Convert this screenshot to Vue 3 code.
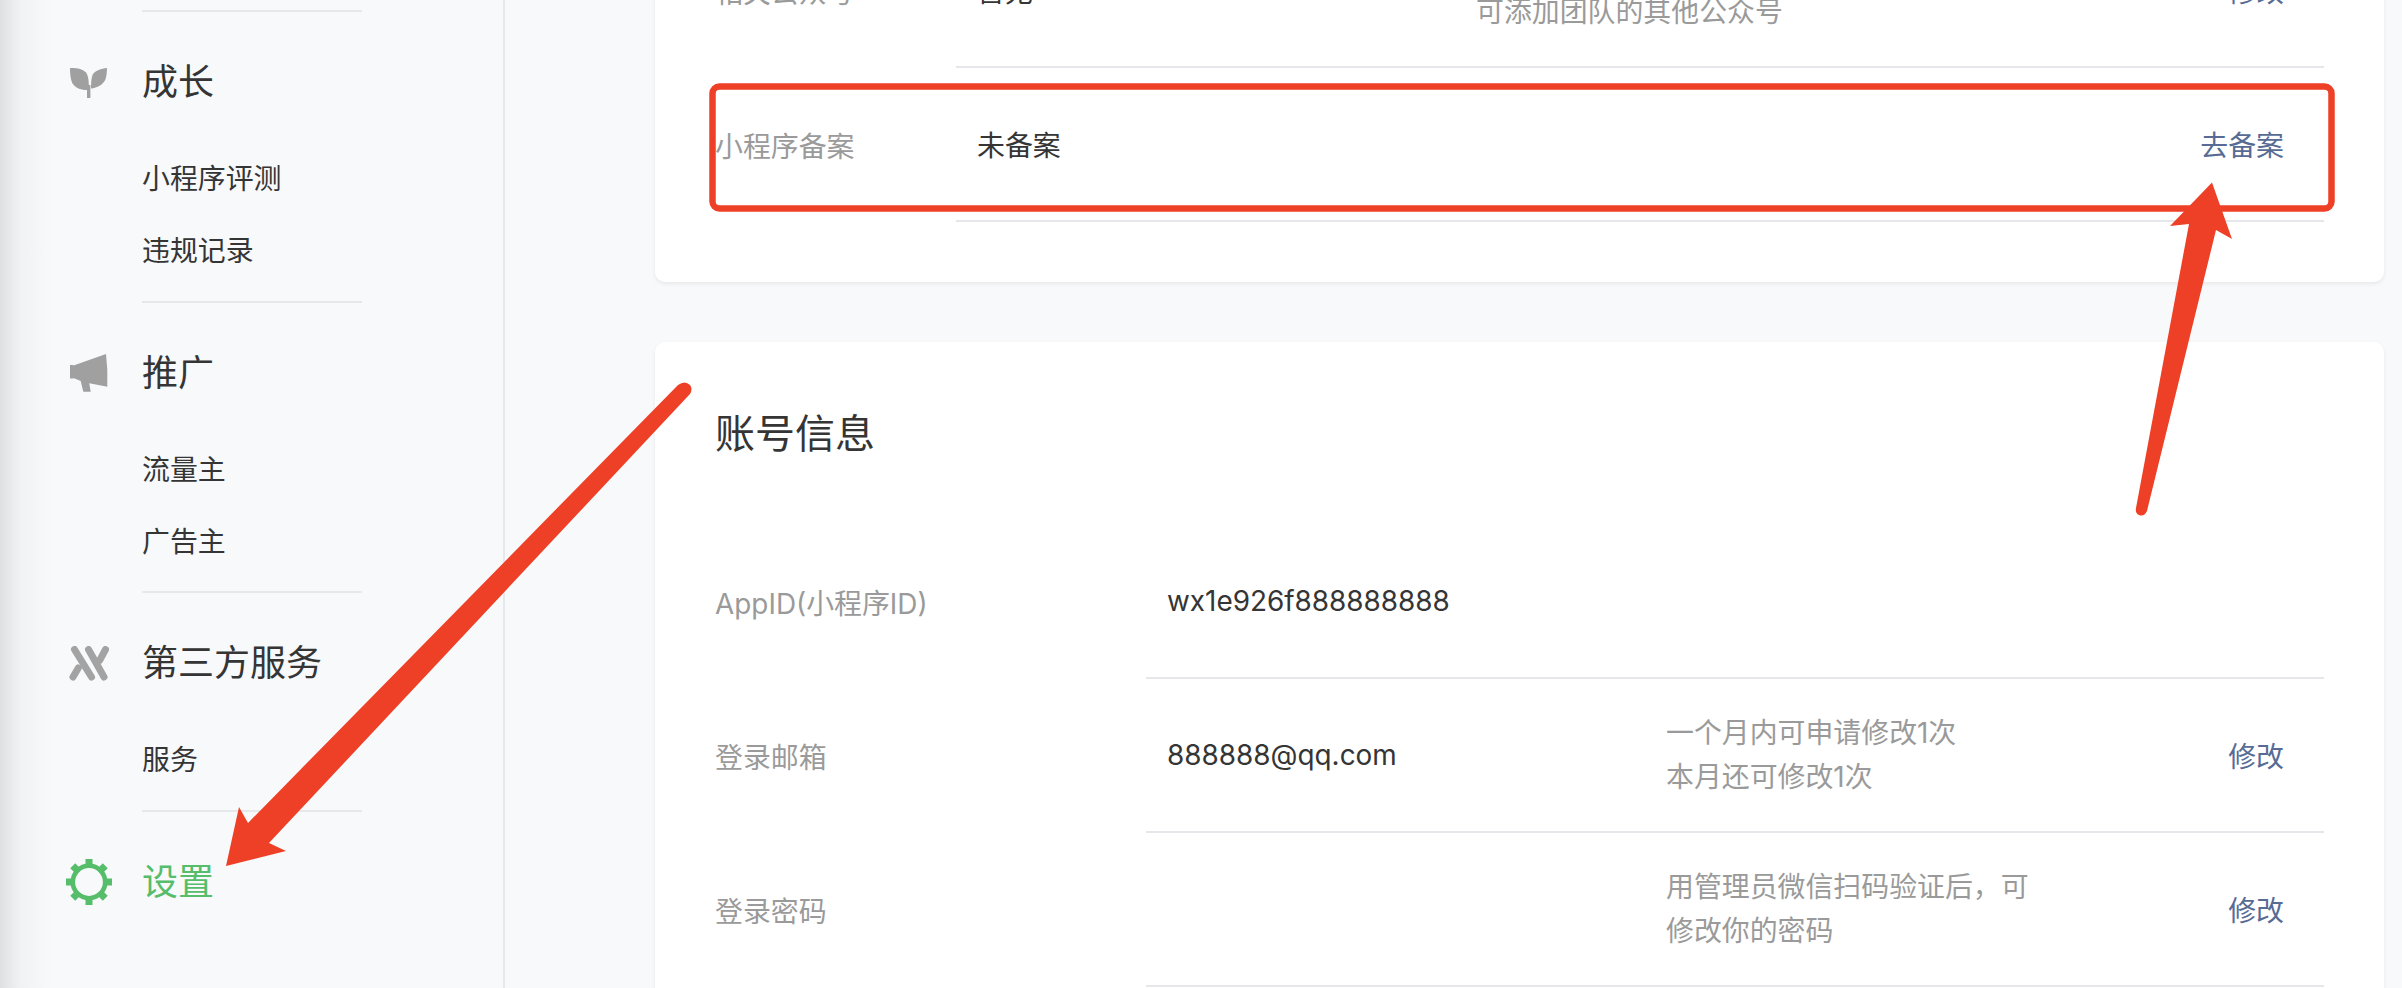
<script setup>
const navGroups = [
  { title: "成长", icon: "sprout", items: ["小程序评测", "违规记录"] },
  { title: "推广", icon: "horn", items: ["流量主", "广告主"] },
  { title: "第三方服务", icon: "tri", items: ["服务"] },
];

const gearTeeth = [0, 45, 90, 135, 180, 225, 270, 315];

const infoRows = [
  { label: "相关公众号", value: "暂无", desc: ["", "可添加团队的其他公众号"], link: "修改" },
  { label: "小程序备案", value: "未备案", desc: [], link: "去备案" },
];

const accountRows = [
  { label: "AppID(小程序ID)", value: "wx1e926f888888888", desc: [], link: "" },
  { label: "登录邮箱", value: "888888@qq.com", desc: ["一个月内可申请修改1次", "本月还可修改1次"], link: "修改" },
  { label: "登录密码", value: "", desc: ["用管理员微信扫码验证后，可", "修改你的密码"], link: "修改" },
];
</script>

<template>
  <div class="page">
    <aside class="sidebar">
      <template v-for="group in navGroups" :key="group.title">
        <div class="nav-line"></div>
        <div class="nav-head">
          <span class="nav-icon">
            <svg v-if="group.icon === 'sprout'" width="38" height="31" viewBox="0 0 38 31" fill="#a0a0a0">
              <path d="M0 1C7 0.8 13 2 16 5.5C18.5 9 19 15 18.8 23C11 23.5 5 21 2.2 16C0.5 12 0 6 0 1Z" />
              <path d="M37 1C31 1.5 25.5 3.5 23 7C21.4 10 21 16 21 21.5C27.5 20.8 32.5 18 35.2 13C36.5 9.5 37 5 37 1Z" />
              <rect x="17" y="18" width="3.4" height="13" />
            </svg>
            <svg v-else-if="group.icon === 'horn'" width="38" height="38" viewBox="0 0 38 38" fill="#a0a0a0">
              <path d="M0 11L3 11L3.5 11.5L36 0Q38 16 37.3 32.7L19.3 29.3L20.7 37.7L13.3 37.7L10.7 27L4 24.3L3 24.5L0 24.5Z" />
            </svg>
            <svg v-else width="40" height="35" viewBox="0 0 40 35" fill="none" stroke="#a3a3a3" stroke-width="7" stroke-linecap="round">
              <path d="M5.5 3.5L22.5 31" />
              <path d="M19.5 3.5L35 31" />
              <path d="M36.5 3.5L30.7 14.3" />
              <path d="M4 31L9.3 22" />
            </svg>
          </span>
          <span class="nav-title">{{ group.title }}</span>
        </div>
        <ul class="nav-list">
          <li v-for="item in group.items" :key="item">{{ item }}</li>
        </ul>
      </template>
      <div class="nav-line"></div>
      <div class="nav-head nav-head--on">
        <span class="nav-icon">
          <svg width="46" height="46" viewBox="0 0 46 46" fill="none">
            <circle cx="23" cy="23" r="16.2" stroke="#56bd6a" stroke-width="4.6" />
            <rect
              v-for="deg in gearTeeth"
              :key="deg"
              x="19.5"
              y="0"
              width="7"
              height="8"
              fill="#56bd6a"
              :transform="`rotate(${deg} 23 23)`"
            />
          </svg>
        </span>
        <span class="nav-title">设置</span>
      </div>
    </aside>

    <main class="content">
      <section class="card card--top">
        <div v-for="row in infoRows" :key="row.label" class="row">
          <div class="row-label">{{ row.label }}</div>
          <div class="row-body">
            <div class="row-value">{{ row.value }}</div>
            <div class="row-desc">
              <div v-for="(line, i) in row.desc" :key="i" class="desc-line">{{ line }}</div>
            </div>
            <a class="row-link">{{ row.link }}</a>
          </div>
        </div>
      </section>

      <section class="card card--account">
        <h2 class="card-title">账号信息</h2>
        <div v-for="row in accountRows" :key="row.label" class="row">
          <div class="row-label">{{ row.label }}</div>
          <div class="row-body">
            <div class="row-value">{{ row.value }}</div>
            <div class="row-desc">
              <div v-for="(line, i) in row.desc" :key="i" class="desc-line">{{ line }}</div>
            </div>
            <a class="row-link">{{ row.link }}</a>
          </div>
        </div>
      </section>
    </main>

    <!-- hand-drawn annotations on top of the screenshot -->
    <svg class="marks" width="2402" height="988" viewBox="0 0 2402 988">
      <rect x="712.5" y="86.5" width="1619" height="122" rx="7" fill="none" stroke="#ee4026" stroke-width="6.5" />
      <path
        fill="#ee4026"
        d="M226 866L239 807L248 823L678 385Q685 380 690 385Q693 389 690 394L269 843L286 851Z"
      />
      <path
        fill="#ee4026"
        d="M2212 182.5L2232 239L2216 230L2147 511Q2144 517 2139 515Q2135 513 2136 508L2189 224L2170 226Z"
      />
    </svg>
  </div>
</template>

<style scoped>
.page {
  position: relative;
  display: flex;
  width: 2402px;
  height: 988px;
  overflow: hidden;
  background: #f8f9fb;
  color: #353535;
  font-family: Inter, "Noto Sans CJK SC", sans-serif;
  font-size: 27.9px;
}

.sidebar {
  flex: none;
  box-sizing: border-box;
  width: 505px;
  padding-top: 10px;
  border-right: 2px solid #e7e8eb;
  background: linear-gradient(90deg, #dfe0e2, #f1f2f4 20px, #f8f9fb 52px);
}

.nav-line {
  width: 220px;
  height: 2px;
  margin-left: 142px;
  background: #e7e8eb;
}

.nav-head {
  display: flex;
  align-items: center;
  height: 72px;
  margin-top: 34px;
}

.nav-icon {
  display: flex;
  justify-content: center;
  box-sizing: border-box;
  width: 106px;
  margin-left: 36px;
}

.nav-icon svg {
  display: block;
}

.nav-title {
  font-size: 36px;
  line-height: 72px;
}

.nav-head--on .nav-title {
  color: #56bd6a;
}

.nav-list {
  margin: 25px 0 13.5px;
  padding: 0 0 0 142px;
  list-style: none;
}

.nav-list li {
  line-height: 72px;
}

.content {
  flex: 1;
  min-width: 0;
  padding: 0 18px 0 150px;
}

.card {
  box-sizing: border-box;
  border-radius: 10px;
  background: #fff;
  box-shadow: 0 2px 4px rgba(0, 0, 0, 0.07);
}

.card--top {
  margin-top: -118px;
  padding: 32px 60px 60px 60px;
  --label-w: 241px;
}

.card--account {
  margin-top: 60px;
  padding: 0 60px 60px 60px;
  --label-w: 431px;
}

.card-title {
  margin: 0;
  padding-top: 62px;
  height: 183px;
  box-sizing: border-box;
  font-size: 40px;
  font-weight: 400;
  line-height: 60px;
}

.row {
  display: flex;
  height: 154px;
}

.row-label {
  flex: none;
  width: var(--label-w);
  align-self: center;
  color: #9a9a9a;
}

.row-body {
  flex: 1;
  display: flex;
  align-items: center;
  padding: 0 40px 0 21px;
  border-bottom: 2px solid #e7e7eb;
}

.row-value {
  flex: none;
  width: 499px;
  white-space: nowrap;
}

.row-desc {
  flex: 1;
  color: #9a9a9a;
  line-height: 44px;
}

.desc-line {
  min-height: 44px;
  white-space: nowrap;
}

.row-link {
  flex: none;
  color: #576b95;
}

.marks {
  position: absolute;
  top: 0;
  left: 0;
  pointer-events: none;
}
</style>
